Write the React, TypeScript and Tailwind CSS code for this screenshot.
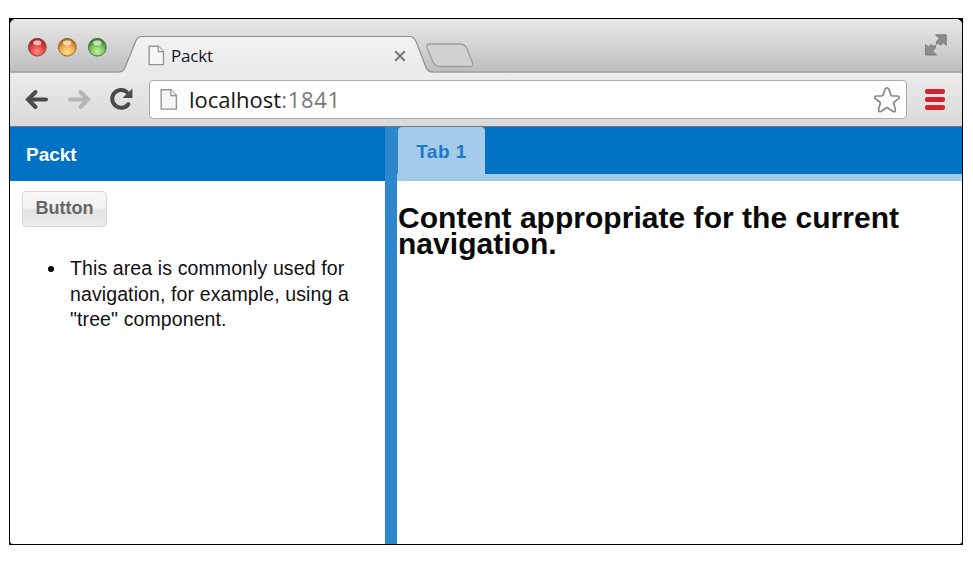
function PageIcon({ className }: { className: string }) {
  return (
    <svg viewBox="0 0 18 22" className={className} fill="none">
      <path d="M1.2 1.2H11L16.4 6.8V20.6H1.2Z" fill="#f6f6f6" stroke="#939393" strokeWidth="1.4" />
      <path d="M10.8 1.2V7H16.4" fill="#fff" stroke="#939393" strokeWidth="1.3" />
    </svg>
  );
}

function Lights() {
  return (
    <svg viewBox="0 0 80 20" className="mt-[18px] ml-[17px] h-5 w-20 shrink-0">
      <defs>
        <radialGradient id="red" cx=".5" cy=".75" r=".65">
          <stop offset="0" stopColor="#ff8c85" /><stop offset=".6" stopColor="#e8433f" /><stop offset="1" stopColor="#a81f22" />
        </radialGradient>
        <radialGradient id="amber" cx=".5" cy=".75" r=".65">
          <stop offset="0" stopColor="#ffe38c" /><stop offset=".6" stopColor="#f2ab45" /><stop offset="1" stopColor="#b06a20" />
        </radialGradient>
        <radialGradient id="green" cx=".5" cy=".75" r=".65">
          <stop offset="0" stopColor="#c6f5a0" /><stop offset=".6" stopColor="#79c35f" /><stop offset="1" stopColor="#37792e" />
        </radialGradient>
      </defs>
      <circle cx="10.3" cy="10.2" r="8.9" fill="url(#red)" stroke="#8f4a4a" strokeWidth="1" />
      <circle cx="40.3" cy="10.2" r="8.9" fill="url(#amber)" stroke="#96703c" strokeWidth="1" />
      <circle cx="70.3" cy="10.2" r="8.9" fill="url(#green)" stroke="#50783f" strokeWidth="1" />
      <ellipse cx="10.3" cy="5.8" rx="4.2" ry="2.5" fill="#fff" opacity=".65" />
      <ellipse cx="40.3" cy="5.8" rx="4.2" ry="2.5" fill="#fff" opacity=".65" />
      <ellipse cx="70.3" cy="5.8" rx="4.2" ry="2.5" fill="#fff" opacity=".65" />
    </svg>
  );
}

function TabStrip() {
  return (
    <div className="relative flex h-[54px] shrink-0 bg-gradient-to-b from-[#e9e9e9] to-[#bdbdbd]">
      <svg viewBox="0 0 952 54" className="absolute inset-0 h-[54px] w-[952px]" fill="none">
        <defs>
          <linearGradient id="tab" x1="0" y1="0" x2="0" y2="1">
            <stop offset="0" stopColor="#f3f3f3" /><stop offset="1" stopColor="#e9e9e9" />
          </linearGradient>
        </defs>
        <path d="M0 53.5H108C112 53.5 113.5 52 115 48.5L126 21.5C127.5 18.2 129 17.5 132 17.5H399C402.5 17.5 404.5 19 406 22.5L416 48.5C417.5 52.5 419.5 53.5 423 53.5H952V55H0Z" fill="url(#tab)" />
        <path d="M0 53H108C112 53 113.5 52 115 48.5L126 21.5C127.5 18.2 129 17.5 132 17.5H399C402.5 17.5 404.5 19 406 22.5L416 48.5C417.5 52 419.5 53 423 53H952" stroke="#8e8e8e" strokeWidth="1.2" />
        <path d="M418.5 25H449C453 25 454.5 26.5 456 30L461.5 43.5C462.5 46.5 461.5 47.5 459 47.5H429C425.5 47.5 423.5 46 422 43L416 28.5C415.3 26 416 25 418.5 25Z" transform="translate(1 0)" fill="#d1d1d4" stroke="#9d9d9d" strokeWidth="1.3" />
      </svg>
      <Lights />
      <div className="relative ml-[41px] flex h-[54px] w-[260px] shrink-0">
        <PageIcon className="mt-[26px] h-[21px] w-[17px]" />
        <span className="mt-[25px] ml-[6px] font-['Open_Sans',sans-serif] text-[17px] leading-6 font-medium tracking-[-0.2px] text-[#161616]">Packt</span>
        <svg viewBox="0 0 12 12" className="mt-[31px] mr-[2px] ml-auto h-3 w-3" stroke="#777" strokeWidth="2">
          <path d="M1.3 1.3L10.7 10.7M10.7 1.3L1.3 10.7" />
        </svg>
      </div>
      <svg viewBox="0 0 22 22" className="relative mt-[15px] mr-[15px] ml-auto h-[22px] w-[22px]" fill="#8c8c8c" stroke="#727272" strokeWidth=".8">
        <path d="M10.5 .8H21.3V11.5L18.3 8.7L15.7 11.3L13.6 9.3L11.4 10.4V7.5L14.4 4.6Z" />
        <path d="M.5 10.5L3.3 13L6.2 10.4L8 12.3L10.3 11.3V14.2L7.5 17.1L11.5 21H.5Z" />
      </svg>
    </div>
  );
}

function Toolbar() {
  return (
    <div className="flex h-[54px] shrink-0 items-start border-b border-[#777] bg-gradient-to-b from-[#ececec] to-[#d9d9d9] pt-[7px]">
      <svg viewBox="0 0 24 22" className="mt-2 ml-[15px] h-[22px] w-6" fill="none" stroke="#4b4b4b" strokeWidth="4" strokeLinecap="round">
        <path d="M4 11.5H21" /><path d="M10.5 4L3 11.5L10.5 19" />
      </svg>
      <svg viewBox="0 0 24 22" className="mt-2 ml-[18px] h-[22px] w-6" fill="none" stroke="#b5b5b5" strokeWidth="4" strokeLinecap="round">
        <path d="M3 11.5H20" /><path d="M13.5 4L21 11.5L13.5 19" />
      </svg>
      <svg viewBox="0 0 24 24" className="mt-[7px] ml-[18px] h-6 w-6" fill="none" stroke="#4b4b4b" strokeWidth="4" strokeLinecap="round">
        <path d="M17.8 5A8.900 8.900 0 1 0 19.300 17.200" />
        <path d="M23.400 1.500V11H13.500Z" fill="#4b4b4b" stroke="none" />
      </svg>
      <div className="ml-4 flex h-[39px] w-[758px] items-start rounded-[4px] border border-[#ababab] bg-white">
        <PageIcon className="mt-[7px] ml-[10px] h-[23px] w-[18px]" />
        <span className="mt-[3px] ml-[11px] font-['Open_Sans',sans-serif] text-[22px] leading-[30px] font-medium text-[#161616]">
          localhost<span className="tracking-[0.7px] text-[#777]">:1841</span>
        </span>
        <svg viewBox="0 0 28 28" className="mt-[5px] mr-[5px] ml-auto h-7 w-7" fill="none" stroke="#888" strokeWidth="1.7" strokeLinejoin="round">
          <path d="M14 1.8Q15.3 1.8 15.9 3.2L17.8 8.7Q18.1 9.7 19.2 9.8L24.7 10Q27.5 10.5 25.6 12.7L21.3 16Q20.5 16.7 20.8 17.8L22.4 23.5Q22.5 26.5 20 25.5L15 22Q14 21.4 13 22L8 25.5Q5.5 26.5 5.6 23.5L7.2 17.8Q7.5 16.7 6.7 16L2.4 12.7Q.5 10.5 3.3 10L8.8 9.8Q9.9 9.7 10.2 8.7L12.1 3.2Q12.7 1.8 14 1.8Z" />
        </svg>
      </div>
      <div className="mt-[9px] ml-[18px] flex w-5 flex-col gap-[3px]">
        <i className="h-[5px] rounded-[2px] bg-[#cf2530]" />
        <i className="h-[5px] rounded-[2px] bg-[#cf2530]" />
        <i className="h-[5px] rounded-[2px] bg-[#cf2530]" />
      </div>
    </div>
  );
}

export default function App() {
  return (
    <div className="h-[566px] w-[973px] overflow-hidden bg-white pt-[18px] pl-[9px] font-['Liberation_Sans',Arial,sans-serif]">
      <div className="h-[527px] w-[954px] border border-black bg-black">
        <div className="flex h-[525px] w-[952px] flex-col overflow-hidden rounded-t-[6px] rounded-b-[3px] bg-white">
          <TabStrip />
          <Toolbar />
          <div className="flex min-h-0 grow">
            <aside className="w-[375px] shrink-0">
              <header className="flex h-[54px] items-center bg-[#0072c4] pt-[2px] pl-4 text-[19px] font-bold text-white">
                <span>Packt</span>
              </header>
              <button className="mt-[10px] ml-3 flex h-9 w-[85px] items-center justify-center rounded-[4px] border border-[#d8d8d8] bg-[linear-gradient(#f8f8f8,#f1f1f1_48%,#e3e3e3_52%,#ededed)] pb-px text-[18px] font-bold text-[#666]">
                Button
              </button>
              <div className="mt-[29px] flex text-[19.5px] leading-[25.5px] tracking-[0.11px] text-[#111]">
                <span className="mt-[10px] ml-[38px] h-[6px] w-[6px] shrink-0 rounded-full bg-black" />
                <p className="ml-4 whitespace-nowrap">This area is commonly used for<br />navigation, for example, using a<br />"tree" component.</p>
              </div>
            </aside>
            <div className="w-3 shrink-0 bg-[#2d87cc]" />
            <main className="grow">
              <nav className="flex h-[54px] border-b-[7px] border-[#a4cbea] bg-[#0072c4]">
                <div className="w-px bg-[#2d87cc]" />
                <div className="flex h-[47px] w-[87px] items-center justify-center rounded-t-[4px] bg-[#a4cbea] pt-[3px] text-[19px] font-bold tracking-[0.5px] text-[#1a7ac6]">
                  <span>Tab 1</span>
                </div>
              </nav>
              <h1 className="mt-[24px] ml-px text-[30px] leading-[26px] font-bold tracking-[0.03px] whitespace-nowrap text-[#0a0a0a]">
                Content appropriate for the current<br />navigation.
              </h1>
            </main>
          </div>
        </div>
      </div>
    </div>
  );
}
